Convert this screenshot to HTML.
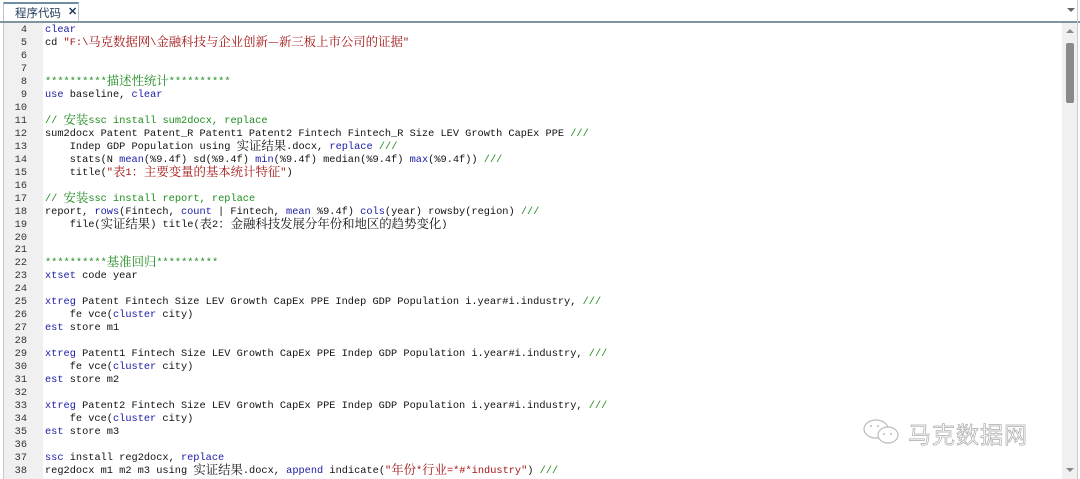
<!DOCTYPE html>
<html><head><meta charset="utf-8"><style>
html,body{margin:0;padding:0;width:1080px;height:479px;overflow:hidden;background:#fff;font-family:"Liberation Sans","Noto Sans CJK SC",sans-serif;}
#tabbar{position:absolute;left:0;top:0;width:1080px;height:21px;background:#fff;border-bottom:2px solid #7f949e;}
#tab{position:absolute;left:3px;top:2px;width:76px;height:19px;border:1px solid #b9c6cf;border-bottom:none;border-top:2px solid #6f8ea3;box-sizing:border-box;background:#fff;font-size:11.5px;color:#1e3a5a;}
#tab span{position:absolute;left:11px;top:1px;}
#tab b{position:absolute;left:64px;top:1px;font-size:11px;color:#1e3a5a;}
#dd{position:absolute;left:1067px;top:8px;width:0;height:0;border-left:4px solid transparent;border-right:4px solid transparent;border-top:4px solid #666;}
#gutter{position:absolute;left:3px;top:23px;width:39px;height:456px;background:#f0f0f0;border-left:1px solid #c8c8c8;}
#code{position:absolute;left:0;top:24px;width:1060px;font-family:"Liberation Mono","Noto Serif CJK SC",monospace;font-size:10.3px;}
.l{height:12.98px;line-height:12.98px;white-space:pre;position:relative;overflow:visible;}
.n{position:absolute;left:0;top:0;width:27px;text-align:right;color:#333;}
.c{position:absolute;left:45px;top:0;color:#111;height:12.98px;}
.z{font-family:"Noto Serif CJK SC",serif;font-size:12.4px;display:inline-block;height:12.98px;line-height:12.98px;vertical-align:top;position:relative;top:-2px;}
.k{color:#1a1aa6}.s{color:#a31515}.g{color:#1e8c1e}
#sb{position:absolute;left:1062px;top:23px;width:15px;height:456px;background:#f0f0f0;}
#thumb{position:absolute;left:1066px;top:43px;width:8px;height:60px;background:#8a8a8a;border-radius:2px;}
#up{position:absolute;left:1066px;top:29px;border-left:4px solid transparent;border-right:4px solid transparent;border-bottom:4px solid #888;}
#down{position:absolute;left:1066px;top:468px;border-left:4px solid transparent;border-right:4px solid transparent;border-top:4px solid #888;}
#rb{position:absolute;left:1077px;top:0;width:1px;height:479px;background:#ccc;}
#wm{position:absolute;left:908px;top:416px;font-size:23px;font-family:"Noto Sans CJK SC",sans-serif;letter-spacing:1px;color:#fff;-webkit-text-stroke:0.7px #aaa;}
</style></head><body>
<div id="tabbar"><div id="tab"><span>程序代码</span><b>✕</b></div><div id="dd"></div></div>
<div id="gutter"></div>
<div id="code">
<div class="l"><span class="n">4</span><span class="c"><span class="k">clear</span></span></div>
<div class="l"><span class="n">5</span><span class="c">cd <span class="s">"F:\<span class="z">马克数据网</span>\<span class="z">金融科技与企业创新—新三板上市公司的证据</span>"</span></span></div>
<div class="l"><span class="n">6</span></div>
<div class="l"><span class="n">7</span></div>
<div class="l"><span class="n">8</span><span class="c g">**********<span class="z">描述性统计</span>**********</span></div>
<div class="l"><span class="n">9</span><span class="c"><span class="k">use</span> baseline, <span class="k">clear</span></span></div>
<div class="l"><span class="n">10</span></div>
<div class="l"><span class="n">11</span><span class="c g">// <span class="z">安装</span>ssc install sum2docx, replace</span></div>
<div class="l"><span class="n">12</span><span class="c">sum2docx Patent Patent_R Patent1 Patent2 Fintech Fintech_R Size LEV Growth CapEx PPE <span class="g">///</span></span></div>
<div class="l"><span class="n">13</span><span class="c">    Indep GDP Population using <span class="z">实证结果</span>.docx, <span class="k">replace</span> <span class="g">///</span></span></div>
<div class="l"><span class="n">14</span><span class="c">    stats(N <span class="k">mean</span>(%9.4f) sd(%9.4f) <span class="k">min</span>(%9.4f) median(%9.4f) <span class="k">max</span>(%9.4f)) <span class="g">///</span></span></div>
<div class="l"><span class="n">15</span><span class="c">    title(<span class="s">"<span class="z">表</span>1<span class="z">：主要变量的基本统计特征</span>"</span>)</span></div>
<div class="l"><span class="n">16</span></div>
<div class="l"><span class="n">17</span><span class="c g">// <span class="z">安装</span>ssc install report, replace</span></div>
<div class="l"><span class="n">18</span><span class="c">report, <span class="k">rows</span>(Fintech, <span class="k">count</span> | Fintech, <span class="k">mean</span> %9.4f) <span class="k">cols</span>(year) rowsby(region) <span class="g">///</span></span></div>
<div class="l"><span class="n">19</span><span class="c">    file(<span class="z">实证结果</span>) title(<span class="z">表</span>2<span class="z">：金融科技发展分年份和地区的趋势变化</span>)</span></div>
<div class="l"><span class="n">20</span></div>
<div class="l"><span class="n">21</span></div>
<div class="l"><span class="n">22</span><span class="c g">**********<span class="z">基准回归</span>**********</span></div>
<div class="l"><span class="n">23</span><span class="c"><span class="k">xtset</span> code year</span></div>
<div class="l"><span class="n">24</span></div>
<div class="l"><span class="n">25</span><span class="c"><span class="k">xtreg</span> Patent Fintech Size LEV Growth CapEx PPE Indep GDP Population i.year#i.industry, <span class="g">///</span></span></div>
<div class="l"><span class="n">26</span><span class="c">    fe vce(<span class="k">cluster</span> city)</span></div>
<div class="l"><span class="n">27</span><span class="c"><span class="k">est</span> store m1</span></div>
<div class="l"><span class="n">28</span></div>
<div class="l"><span class="n">29</span><span class="c"><span class="k">xtreg</span> Patent1 Fintech Size LEV Growth CapEx PPE Indep GDP Population i.year#i.industry, <span class="g">///</span></span></div>
<div class="l"><span class="n">30</span><span class="c">    fe vce(<span class="k">cluster</span> city)</span></div>
<div class="l"><span class="n">31</span><span class="c"><span class="k">est</span> store m2</span></div>
<div class="l"><span class="n">32</span></div>
<div class="l"><span class="n">33</span><span class="c"><span class="k">xtreg</span> Patent2 Fintech Size LEV Growth CapEx PPE Indep GDP Population i.year#i.industry, <span class="g">///</span></span></div>
<div class="l"><span class="n">34</span><span class="c">    fe vce(<span class="k">cluster</span> city)</span></div>
<div class="l"><span class="n">35</span><span class="c"><span class="k">est</span> store m3</span></div>
<div class="l"><span class="n">36</span></div>
<div class="l"><span class="n">37</span><span class="c"><span class="k">ssc</span> install reg2docx, <span class="k">replace</span></span></div>
<div class="l"><span class="n">38</span><span class="c">reg2docx m1 m2 m3 using <span class="z">实证结果</span>.docx, <span class="k">append</span> indicate(<span class="s">"<span class="z">年份</span>*<span class="z">行业</span>=*#*industry"</span>) <span class="g">///</span></span></div>
</div>
<svg style="position:absolute;left:862px;top:418px" width="42" height="30" viewBox="0 0 42 30">
<ellipse cx="14" cy="11" rx="12" ry="9" fill="#fff" stroke="#bbb" stroke-width="1.2"/>
<ellipse cx="26" cy="17" rx="10" ry="8" fill="#fff" stroke="#bbb" stroke-width="1.2"/>
<circle cx="9" cy="8" r="1" fill="#bbb"/><circle cx="16" cy="8" r="1" fill="#bbb"/>
<circle cx="22" cy="16" r="1" fill="#bbb"/><circle cx="29" cy="16" r="1" fill="#bbb"/>
</svg>
<div id="wm">马克数据网</div>
<div id="sb"></div><div id="up"></div><div id="thumb"></div><div id="down"></div>
<div id="rb"></div>
</body></html>
